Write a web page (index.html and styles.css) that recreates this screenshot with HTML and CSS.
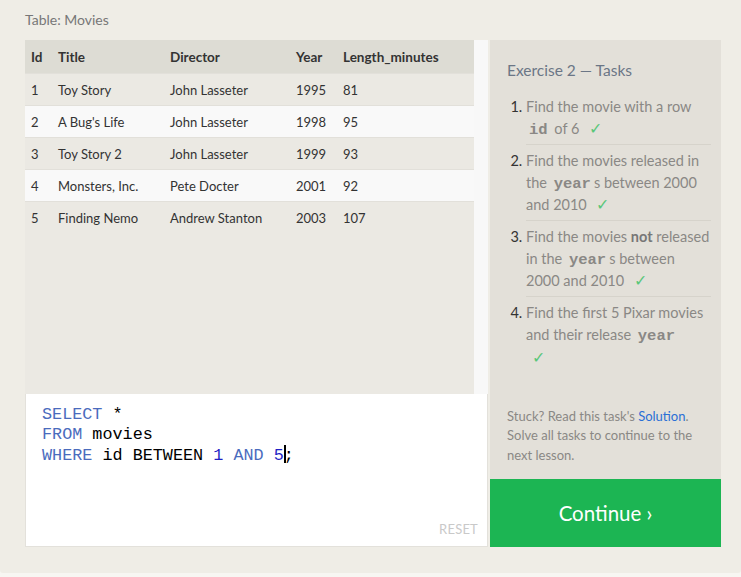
FILE: index.html
```html
<!DOCTYPE html>
<html>
<head>
<meta charset="utf-8">
<link rel="stylesheet" href="styles.css">
</head>
<body>
<div class="page">
  <div class="caption">Table: Movies</div>
  <div class="workspace">
    <div class="left">
      <div class="table-area">
        <div class="table-wrap">
          <table class="movies">
            <thead>
              <tr><th class="c-id">Id</th><th class="c-title">Title</th><th class="c-dir">Director</th><th class="c-year">Year</th><th>Length_minutes</th></tr>
            </thead>
            <tbody>
              <tr><td>1</td><td>Toy Story</td><td>John Lasseter</td><td>1995</td><td>81</td></tr>
              <tr><td>2</td><td>A Bug's Life</td><td>John Lasseter</td><td>1998</td><td>95</td></tr>
              <tr><td>3</td><td>Toy Story 2</td><td>John Lasseter</td><td>1999</td><td>93</td></tr>
              <tr><td>4</td><td>Monsters, Inc.</td><td>Pete Docter</td><td>2001</td><td>92</td></tr>
              <tr><td>5</td><td>Finding Nemo</td><td>Andrew Stanton</td><td>2003</td><td>107</td></tr>
            </tbody>
          </table>
        </div>
        <div class="scrollbar"></div>
      </div>
      <div class="editor">
        <pre class="code"><span class="kw">SELECT</span> *
<span class="kw">FROM</span> movies
<span class="kw">WHERE</span> id BETWEEN <span class="num">1</span> <span class="kw">AND</span> <span class="num">5</span><span class="cursor"></span>;</pre>
        <div class="reset">RESET</div>
      </div>
    </div>
    <div class="right">
      <div class="tasks">
        <div class="tasks-title">Exercise 2 — Tasks</div>
        <ol class="task-list">
          <li>Find the movie with a row <code>id</code> of 6 <span class="check">✓</span></li>
          <li>Find the movies released in the <code>year</code>s between 2000 and 2010 <span class="check">✓</span></li>
          <li>Find the movies <b>not</b> released in the <code>year</code>s between 2000 and 2010 <span class="check">✓</span></li>
          <li>Find the first 5 Pixar movies and their release <code>year</code> <span class="check check-own-line">✓</span></li>
        </ol>
        <p class="stuck">Stuck? Read this task's <a href="#">Solution</a>.<br>Solve all tasks to continue to the next lesson.</p>
      </div>
      <div class="continue">Continue ›</div>
    </div>
  </div>
</div>
</body>
</html>
```
FILE: styles.css
```css
html, body {
  margin: 0;
  padding: 0;
  background: #f7f6f2;
}
body {
  font-family: Lato, "Open Sans", sans-serif;
  color: #333;
}
.page {
  width: 741px;
  height: 573px;
  box-sizing: border-box;
  background: #efede6;
  padding: 10px 20px 0 25px;
  border-radius: 0 0 3px 3px;
}
.caption {
  font-size: 14px;
  color: #777;
  line-height: 20px;
  height: 30px;
}
.workspace {
  display: flex;
  gap: 2px;
  width: 696px;
}
.left {
  width: 463px;
  display: flex;
  flex-direction: column;
}
.table-area {
  height: 354px;
  display: flex;
  background: #ebe9e3;
}
.table-wrap {
  width: 449px;
}
.scrollbar {
  width: 14px;
  background: #f8f8f8;
}
.movies {
  border-collapse: collapse;
  width: 100%;
  font-size: 13px;
}
.movies th, .movies td {
  text-align: left;
  padding: 0 0 0 6px;
  white-space: nowrap;
}
.movies th {
  height: 33px;
  font-weight: bold;
  font-size: 13.5px;
  background: #dddcd4;
  color: #333;
}
.movies td {
  height: 31px;
  border-top: 1px solid #e2e0da;
}
.movies tbody tr:nth-child(odd) td { background: #ebe9e3; }
.movies tbody tr:nth-child(even) td { background: #f9f9f9; }
.c-id { width: 21px; }
.c-title { width: 106px; }
.c-dir { width: 120px; }
.c-year { width: 41px; }

.editor {
  height: 153px;
  box-sizing: border-box;
  background: #fff;
  border: 1px solid #e3e1db;
  border-top: none;
  display: flex;
  flex-direction: column;
  justify-content: space-between;
  padding: 11px 9px 9px 16px;
}
.code {
  margin: 0;
  font-family: "Liberation Mono", monospace;
  font-size: 16.8px;
  line-height: 20px;
  color: #000;
}
.kw { color: #4a6bbd; }
.num { color: #1f1fc4; }
.cursor {
  display: inline-block;
  width: 2px;
  height: 18px;
  background: #000;
  vertical-align: -3px;
  margin-right: -2px;
}
.reset {
  align-self: flex-end;
  font-size: 13px;
  color: #c9c9c9;
  letter-spacing: 0.2px;
}

.right {
  width: 231px;
  display: flex;
  flex-direction: column;
}
.tasks {
  height: 439px;
  box-sizing: border-box;
  background: #e3e0d9;
  padding: 20px 4px 0 17px;
  display: flex;
  flex-direction: column;
}
.tasks-title {
  font-size: 15.5px;
  color: #6b7686;
  line-height: 20px;
}
.task-list {
  margin: 11px 0 0 0;
  padding: 0 0 0 19px;
  font-size: 14.5px;
  color: #8a8885;
  line-height: 22px;
}
.task-list li {
  padding: 5px 0 4px 0;
  margin-right: 6px;
  border-bottom: 1px solid #d6d3cb;
}
.task-list li:last-child {
  border-bottom: none;
}
.task-list li::marker {
  color: #333;
}
.task-list b { color: #777; }
.task-list code {
  font-family: "Liberation Mono", monospace;
  font-weight: bold;
  font-size: 15.5px;
  line-height: 10px;
  color: #8a8885;
  padding: 0 3px;
}
.check {
  color: #5ac77a;
  font-size: 16px;
  line-height: 10px;
  margin-left: 6px;
}
.check-own-line {
  display: block;
  line-height: 22px;
  margin-left: 6px;
}
.stuck {
  margin: auto 6px 14px 0;
  font-size: 13px;
  line-height: 19.5px;
  color: #8a8885;
}
.stuck a {
  color: #2a6fd6;
  text-decoration: none;
}
.continue {
  height: 68px;
  background: #1cb553;
  color: #fff;
  font-size: 20.5px;
  display: flex;
  align-items: center;
  justify-content: center;
}
```
